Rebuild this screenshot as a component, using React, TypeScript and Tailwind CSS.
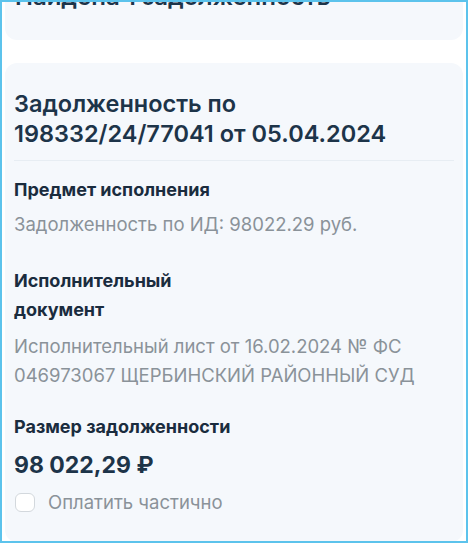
import React from "react";

export default function App() {
  return (
    <div
      className="w-[468px] h-[543px] overflow-hidden border-2 border-[#5cc3ec] bg-white px-[3px]"
      style={{ fontFamily: "Inter, 'Noto Sans', sans-serif" }}
    >
      {/* previous card, cut off at top */}
      <div className="mt-[-40px] h-[78px] rounded-xl bg-[#f5f8fc] px-[10px] pt-[20px]">
        <div className="text-[24px] font-semibold leading-[30px] text-[#1d3449]">Найдена 1 задолженность</div>
      </div>

      <div className="mt-[23px] rounded-xl bg-[#f5f8fc] px-[9px] pt-[26px] pb-[27px]">
        <h2 className="border-b border-[#e7edf3] pb-[11px] text-[23.5px] font-semibold leading-[30px] text-[#1d3449]">
          Задолженность по
          <br />
          198332/24/77041 от 05.04.2024
        </h2>

        <div className="mt-[15px] text-[18px] font-bold leading-[28px] text-[#1a2c3e]">Предмет исполнения</div>
        <div className="mt-[6px] text-[18.5px] leading-[28px] text-[#8a9299]">Задолженность по ИД: 98022.29 руб.</div>

        <div className="mt-[28px] text-[18px] font-bold leading-[29px] text-[#1a2c3e]">
          Исполнительный
          <br />
          документ
        </div>
        <div className="mt-[8px] text-[18.5px] leading-[29px] text-[#8a9299]">
          Исполнительный лист от 16.02.2024 № ФС
          <br />
          046973067 ЩЕРБИНСКИЙ РАЙОННЫЙ СУД
        </div>

        <div className="mt-[23px] text-[18px] font-bold leading-[28px] text-[#1a2c3e]">Размер задолженности</div>
        <div className="mt-[9px] text-[23px] font-bold leading-[30px] text-[#1d3449]">98 022,29 ₽</div>
        <label className="mt-[9px] flex items-center gap-[13px]">
          <span className="ml-[1px] h-[19px] w-[20px] rounded-[6px] border-[1.5px] border-[#d3d8dd] bg-white" />
          <span className="text-[18.5px] leading-[26px] text-[#8a9299]">Оплатить частично</span>
        </label>
      </div>
    </div>
  );
}
